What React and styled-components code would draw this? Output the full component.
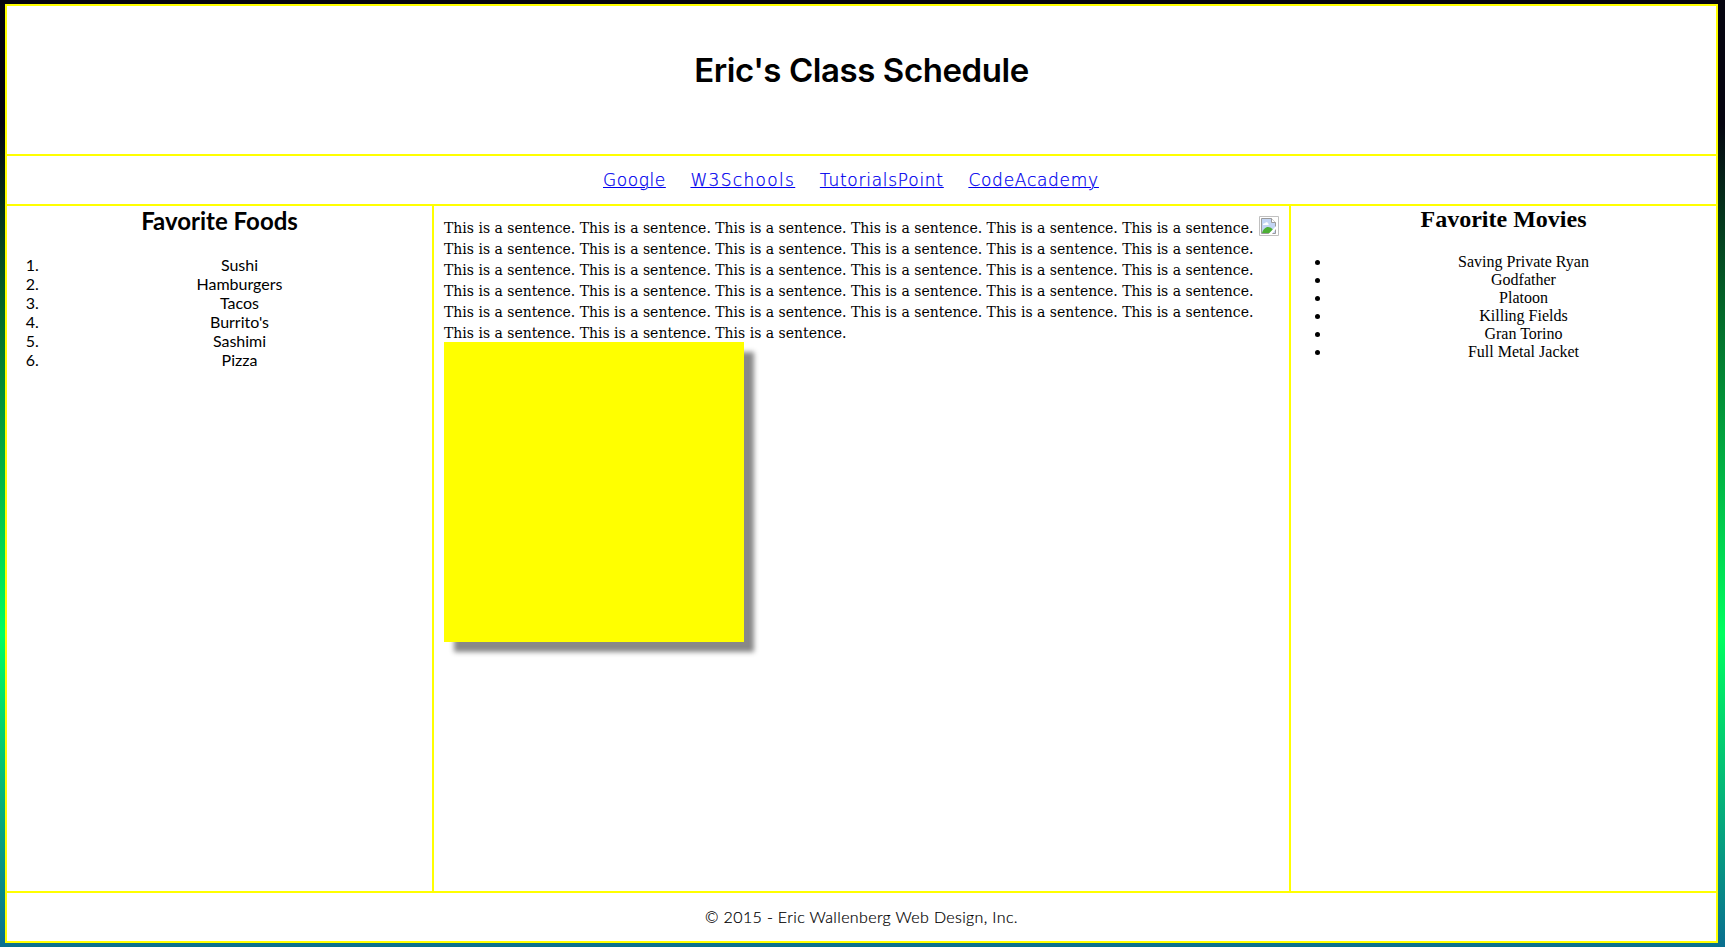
import React from 'react';
import styled, { createGlobalStyle } from 'styled-components';

const GlobalStyle = createGlobalStyle`
  body {
    margin: 0;
    height: 947px;
    overflow: hidden;
    color: #000;
    font: 16px 'Liberation Serif', serif;
    background: linear-gradient(180deg, #060510 0, #060510 13%, #04692a 33%, #00ff60 67%, #0a6f90 100%);
  }
`;

const Page = styled.div`
  box-sizing: border-box;
  width: 1713px;
  height: 939px;
  margin: 4px 7px 4px 5px;
  border: 2px solid #ff0;
  background: #fff;
  display: grid;
  grid-template-rows: 150px 50px 687px 48px;
`;

const Header = styled.header`
  border-bottom: 2px solid #ff0;
  text-align: center;
`;

const Title = styled.h1`
  margin: 0;
  padding-top: 44px;
  font: 600 33px/40px Inter, sans-serif;
  letter-spacing: -0.42px;
`;

const Nav = styled.nav`
  border-bottom: 2px solid #ff0;
  display: flex;
  gap: 24.6px;
  padding-left: 596px;
`;

const NavLink = styled.a`
  height: 20px;
  margin-top: 14px;
  color: #00e;
  font: 200 17px/20px 'DejaVu Sans', sans-serif;
  letter-spacing: ${(p) => p.$spacing}px;
  text-decoration: underline;
  text-decoration-thickness: 1px;
  text-underline-offset: 1px;
  -webkit-text-stroke: 0.25px #00e;
`;

const Columns = styled.main`
  border-bottom: 2px solid #ff0;
  display: grid;
  grid-template-columns: 425px 1fr 425px;
`;

const SideColumn = styled.section`
  text-align: center;
  font-family: ${(p) => p.$font};
  line-height: ${(p) => p.$line}px;
`;

const Heading = styled.h2`
  margin: 0 0 20px;
  font-size: 24px;
  font-weight: 700;
  line-height: ${(p) => p.$line}px;
`;

const List = styled.ul`
  margin: 0;
  padding: 0 0 0 40px;
`;

const NumberedItem = styled.li`
  &::marker {
    content: counter(list-item) '.\\00a0\\00a0';
  }
`;

const Center = styled.section`
  border: solid #ff0;
  border-width: 0 2px;
  padding: 10px;
`;

const Sentences = styled.p`
  margin: 0 0 -2px;
  padding-top: 2px;
  font: 15.55px/21px 'DejaVu Serif Condensed', 'DejaVu Serif', serif;
  font-stretch: condensed;
`;

const MissingImage = styled.svg`
  float: right;
  width: 20px;
  height: 20px;
`;

const Square = styled.div`
  width: 300px;
  height: 300px;
  background: #ff0;
  box-shadow: 10px 10px 5px #888;
`;

const Footer = styled.footer`
  text-align: center;
  font: 300 16px/20px Lato, sans-serif;
  letter-spacing: 0.36px;
  padding-top: 14px;
  -webkit-text-stroke: 0.2px #000;
`;

const links = [
  ['Google', 0.58],
  ['W3Schools', 1.32],
  ['TutorialsPoint', 0.74],
  ['CodeAcademy', 0.73],
];
const foods = ['Sushi', 'Hamburgers', 'Tacos', "Burrito's", 'Sashimi', 'Pizza'];
const movies = ['Saving Private Ryan', 'Godfather', 'Platoon', 'Killing Fields', 'Gran Torino', 'Full Metal Jacket'];

export default function App() {
  return (
    <>
      <GlobalStyle />
      <Page>
        <Header>
          <Title>Eric's Class Schedule</Title>
        </Header>
        <Nav>
          {links.map(([name, spacing]) => (
            <NavLink key={name} href="#" $spacing={spacing}>{name}</NavLink>
          ))}
        </Nav>
        <Columns>
          <SideColumn $font="Lato, sans-serif" $line={19}>
            <Heading $line={29}>Favorite Foods</Heading>
            <List as="ol">{foods.map((f) => <NumberedItem key={f}>{f}</NumberedItem>)}</List>
          </SideColumn>
          <Center>
            <MissingImage viewBox="0 0 20 20">
              <path d="M.5.5h19v19H.5z" fill="#fff" stroke="#c0c0c0" />
              <path d="M2.5 2.5h10l4 4v11h-14z" fill="#c3d5f4" stroke="#9a9a9a" />
              <path d="M4 9c0-2 1.500-2 2-1.500C6.500 5.500 9 6 9 7.500c1 0 1 1.500 0 1.500z" fill="#fff" />
              <path d="M3 17c1-3.500 3.500-6 6-6s4 1.500 5 3l-3 3z" fill="#4caf35" />
              <path d="M12.500 2.500v4h4" fill="#fff" stroke="#9a9a9a" />
              <path d="M9.500 18l7.500-8v3l-4 5z" fill="#fff" />
            </MissingImage>
            <Sentences>{Array(33).fill('This is a sentence.').join(' ')}</Sentences>
            <Square />
          </Center>
          <SideColumn $font="'Liberation Serif', serif" $line={18}>
            <Heading $line={27}>Favorite Movies</Heading>
            <List>{movies.map((m) => <li key={m}>{m}</li>)}</List>
          </SideColumn>
        </Columns>
        <Footer>© 2015 - Eric Wallenberg Web Design, Inc.</Footer>
      </Page>
    </>
  );
}
